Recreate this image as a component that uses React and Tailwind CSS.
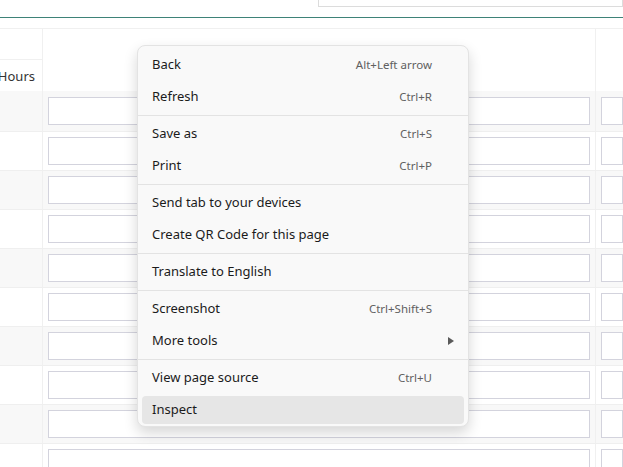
const menuGroups = [
  [
    { label: 'Back', shortcut: 'Alt+Left arrow' },
    { label: 'Refresh', shortcut: 'Ctrl+R' },
  ],
  [
    { label: 'Save as', shortcut: 'Ctrl+S' },
    { label: 'Print', shortcut: 'Ctrl+P' },
  ],
  [
    { label: 'Send tab to your devices' },
    { label: 'Create QR Code for this page' },
  ],
  [{ label: 'Translate to English' }],
  [
    { label: 'Screenshot', shortcut: 'Ctrl+Shift+S' },
    { label: 'More tools', submenu: true },
  ],
  [
    { label: 'View page source', shortcut: 'Ctrl+U' },
    { label: 'Inspect', active: true },
  ],
];

const rows = Array.from({ length: 10 }, (_, i) => i);

function MenuItem({ item }) {
  return (
    <div className="h-[32px] px-[4px] py-[2px]">
      <div
        className={`h-full rounded-[4px] flex items-center pl-[10px] pr-[32px] ${
          item.active ? 'bg-[#e6e6e6]' : ''
        }`}
      >
        <span className="flex-1 text-[13px] text-[#1b1b1b]">{item.label}</span>
        {item.shortcut && <span className="text-[11.5px] text-[#606060]">{item.shortcut}</span>}
        {item.submenu && (
          <svg className="mr-[-22px]" width="6" height="8" viewBox="0 0 6 8">
            <path d="M0 0 L6 4 L0 8 Z" fill="#5a5a5a" />
          </svg>
        )}
      </div>
    </div>
  );
}

export default function App() {
  return (
    <div
      className="relative w-[623px] h-[467px] overflow-hidden bg-white"
      style={{ fontFamily: '"Segoe UI", "Noto Sans", sans-serif' }}
    >
      {/* top bar with cut-off field */}
      <div className="h-[17px]">
        <div className="ml-[318px] h-[7px] border-x border-b border-[#dcdcdc]" />
      </div>
      <div className="h-px bg-[#3e8278]" />
      <div className="h-[10px]" />

      {/* table */}
      <div className="border-t border-[#f0f0f0]">
        {/* header */}
        <div className="flex h-[62px]">
          <div className="w-[43px] border-r border-[#f0f0f0] flex flex-col">
            <div className="h-[31px] border-b border-[#f0f0f0]" />
            <div className="flex-1 flex items-center justify-end pt-[3px] pr-[7px] text-[13px] text-[#333]">Hours</div>
          </div>
          <div className="w-[553px] border-r border-[#f0f0f0]" />
          <div className="flex-1" />
        </div>

        {rows.map((i) => (
          <div
            key={i}
            className={`flex border-b border-[#efefef] ${i === 0 ? 'h-[41px]' : 'h-[39px]'} ${
              i % 2 === 0 ? 'bg-[#f8f8f8]' : 'bg-white'
            }`}
          >
            <div className="w-[43px] border-r border-[#f0f0f0]" />
            <div className="w-[553px] border-r border-[#f0f0f0] flex items-center px-[5px]">
              <div className="w-full h-[28px] bg-white border border-[#d3d3dd]" />
            </div>
            <div className="flex-1 flex items-center pl-[5px]">
              <div className="w-full h-[28px] bg-white border border-[#d3d3dd]" />
            </div>
          </div>
        ))}
      </div>

      {/* context menu */}
      <div className="absolute left-[137px] top-[45px] w-[332px] rounded-[8px] bg-[#f9f9f9] border border-[#e3e3e3] shadow-[0_6px_14px_rgba(0,0,0,0.16)] pt-[3px]">
        {menuGroups.map((group, gi) => (
          <div key={gi}>
            {gi > 0 && <div className="h-px bg-[#e3e3e3] my-[2px]" />}
            {group.map((item) => (
              <MenuItem key={item.label} item={item} />
            ))}
          </div>
        ))}
      </div>
    </div>
  );
}
